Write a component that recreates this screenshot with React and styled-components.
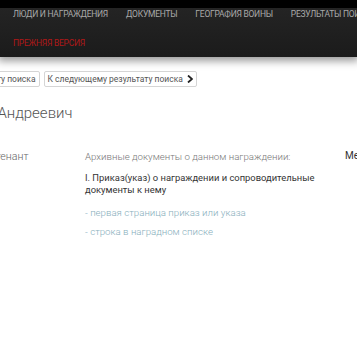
import React from "react";
import styled, { createGlobalStyle } from "styled-components";

const Global = createGlobalStyle`
  html, body {
    margin: 0;
    padding: 0;
    background: #fff;
    overflow: hidden;
    font-family: Roboto, "Liberation Sans", sans-serif;
  }
`;

const Header = styled.header`
  background: #000;
  padding-top: 8px;
`;

const NavBar = styled.nav`
  background: linear-gradient(180deg, #242424 0%, #1b1b1b 100%);
  height: 49px;
  padding: 0 0 0 13px;
  box-shadow: 0 2px 8px 2px rgba(0, 0, 0, 0.4);
  position: relative;
`;

const MenuRow = styled.ul`
  display: flex;
  gap: 18px;
  margin: 0;
  padding: 0;
  list-style: none;
  white-space: nowrap;
  height: 11px;
  align-items: center;
`;

const MenuItem = styled.li`
  color: ${(p) => (p.$old ? "#b01818" : "#a9a9a9")};
  font-size: 8.5px;
  text-transform: uppercase;
  letter-spacing: -0.25px;
`;

const OldRow = styled(MenuRow)`
  margin-top: 18px;
`;

const Main = styled.main`
  margin-left: -109px;
  width: 700px;
  padding-top: 14px;
`;

const Pager = styled.div`
  display: flex;
  gap: 4px;
`;

const PagerButton = styled.span`
  display: inline-flex;
  align-items: center;
  gap: 4px;
  height: 14px;
  padding: 0 3px;
  border: 1px solid #d5d5d5;
  border-radius: 2px;
  font-size: 8.5px;
  color: #555;
  white-space: nowrap;
`;

const Chevron = () => (
  <svg width="6" height="8" viewBox="0 0 6 8">
    <path d="M1 0.5 L5 4 L1 7.5" fill="none" stroke="#222" strokeWidth="1.8" />
  </svg>
);

const Name = styled.h1`
  margin: 16px 0 0 0;
  font-size: 15px;
  font-weight: 300;
  color: #555;
  line-height: 20px;
  word-spacing: -1px;
`;

const AwardRow = styled.div`
  display: grid;
  grid-template-columns: 194px 260px 200px;
  margin-top: 27px;
`;

const Rank = styled.div`
  color: #666;
  font-weight: 300;
  font-size: 10.6px;
  white-space: nowrap;
`;

const Docs = styled.div`
  display: flex;
  flex-direction: column;
`;

const DocsTitle = styled.div`
  color: #777;
  font-weight: 300;
  font-size: 9.7px;
  line-height: 14px;
`;

const DocsGroup = styled.div`
  margin-top: 8px;
  color: #333;
  line-height: 12px;
  font-size: 9.4px;
  width: 240px;
`;

const DocLink = styled.a`
  display: block;
  color: #86aebb;
  font-weight: 300;
  font-size: 9.7px;
  text-decoration: none;
  margin-top: ${(p) => p.$gap}px;
`;

const Medal = styled.div`
  color: #333;
  font-size: 10px;
`;

export default function App() {
  return (
    <>
      <Global />
      <Header>
        <NavBar>
          <MenuRow>
            <MenuItem>Люди и награждения</MenuItem>
            <MenuItem>Документы</MenuItem>
            <MenuItem>География воины</MenuItem>
            <MenuItem>Результаты поиска</MenuItem>
          </MenuRow>
          <OldRow>
            <MenuItem $old>Прежняя версия</MenuItem>
          </OldRow>
        </NavBar>
      </Header>
      <Main>
        <Pager>
          <PagerButton>К предыдущему результату поиска</PagerButton>
          <PagerButton>
            К следующему результату поиска <Chevron />
          </PagerButton>
        </Pager>
        <Name>Кузнецов Иван Андреевич</Name>
        <AwardRow>
          <Rank>гвардии старший лейтенант</Rank>
          <Docs>
            <DocsTitle>Архивные документы о данном награждении:</DocsTitle>
            <DocsGroup>
              I. Приказ(указ) о награждении и сопроводительные документы к нему
            </DocsGroup>
            <DocLink $gap={11}>- первая страница приказ или указа</DocLink>
            <DocLink $gap={8}>- строка в наградном списке</DocLink>
          </Docs>
          <Medal>Медаль «За отвагу»</Medal>
        </AwardRow>
      </Main>
    </>
  );
}
